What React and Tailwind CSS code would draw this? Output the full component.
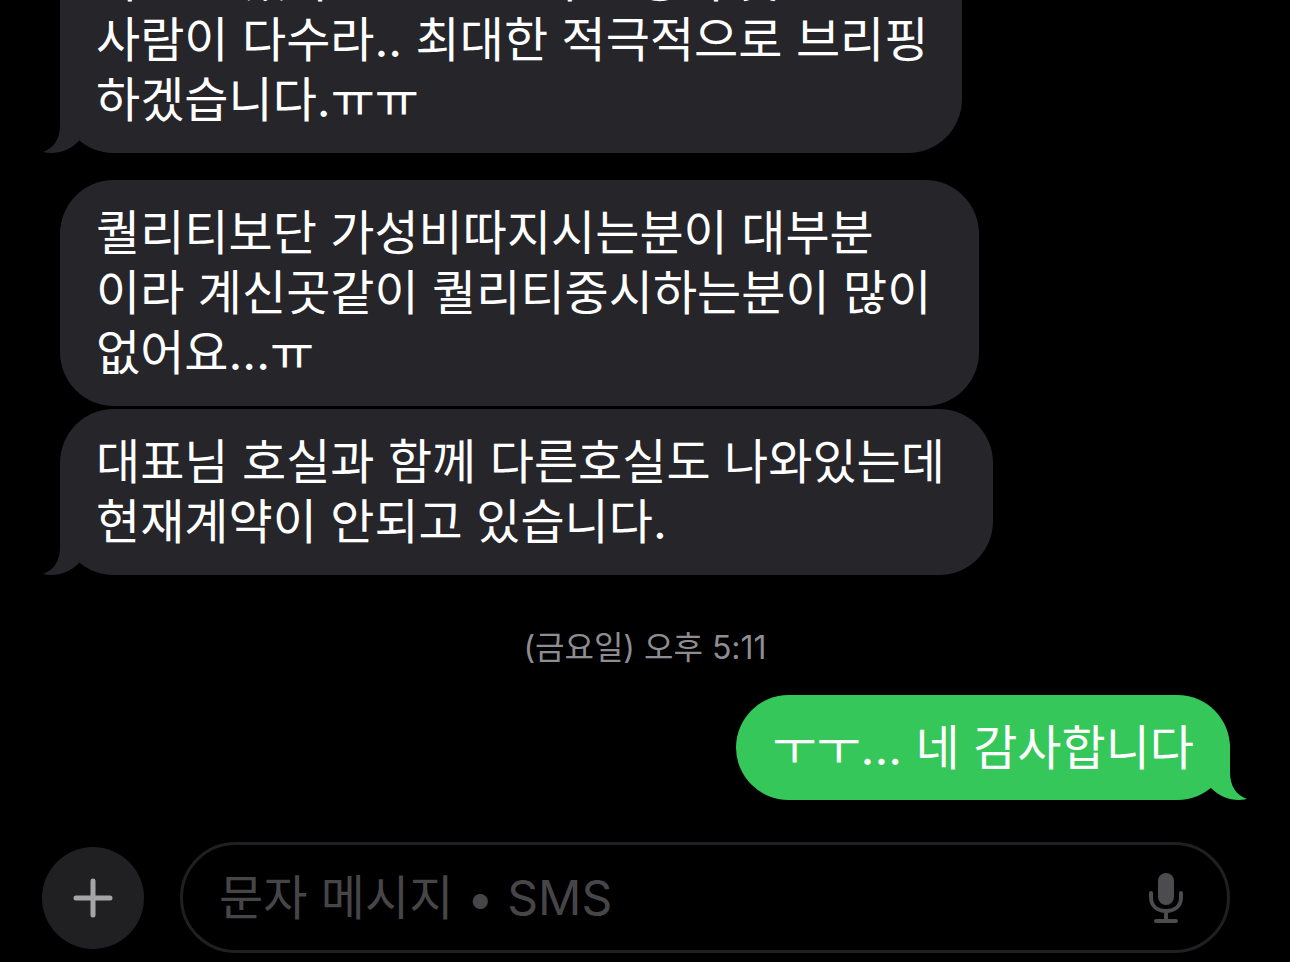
import clsx from "clsx";

const messages = [
  {
    id: 1,
    lines: ["하므로 있다고 보므로 최고 성비 곳", "사람이 다수라.. 최대한 적극적으로 브리핑", "하겠습니다.ㅠㅠ"],
    tail: true,
    className: "pr-[34px]",
  },
  {
    id: 2,
    lines: ["퀄리티보단 가성비따지시는분이 대부분", "이라 계신곳같이 퀄리티중시하는분이 많이", "없어요...ㅠ"],
    tail: false,
    className: "mt-[27px] pr-12",
  },
  {
    id: 3,
    lines: ["대표님 호실과 함께 다른호실도 나와있는데", "현재계약이 안되고 있습니다."],
    tail: true,
    className: "mt-[3px] pr-12",
  },
];

// the path also covers the rounded corner, so only the notch beside the tail shows
function Tail({ sent }) {
  return (
    <svg
      viewBox="0 0 38 56"
      width="38"
      height="56"
      aria-hidden="true"
      className={clsx(
        "absolute bottom-0",
        sent ? "-right-[17px] -scale-x-100 text-[#35c759]" : "-left-[17px] text-[#26252a]"
      )}
    >
      <path d="M17 0V28C17 42 11 51 0 55C13 58 26 54 36 44L38 0Z" fill="currentColor" />
    </svg>
  );
}

function Bubble({ lines, tail, sent, className }) {
  return (
    <div
      className={clsx(
        "relative w-fit rounded-[54px] pl-9 text-5xl/[60px] whitespace-nowrap text-white",
        sent ? "self-end bg-[#35c759]" : "bg-[#26252a]",
        className
      )}
    >
      {tail && <Tail sent={sent} />}
      {lines.map((line) => (
        <p key={line} className="relative">
          {line}
        </p>
      ))}
    </div>
  );
}

function MicIcon() {
  return (
    <svg viewBox="0 0 36 52" width="36" height="52" fill="none" aria-hidden="true">
      <rect x="10" y="1" width="16" height="32" rx="8" fill="currentColor" />
      <path
        d="M3 21V25C3 34 9 39 18 39C27 39 33 34 33 25V21M18 39V49M8 49H28"
        stroke="currentColor"
        strokeWidth="4"
        strokeLinecap="round"
      />
    </svg>
  );
}

export default function App() {
  return (
    <div className="flex h-screen flex-col justify-end overflow-hidden bg-black font-['Inter','Noto_Sans_CJK_KR',sans-serif]">
      <main className="flex flex-col px-[60px]">
        {messages.map((message) => (
          <Bubble
            key={message.id}
            lines={message.lines}
            tail={message.tail}
            className={clsx("py-[23px]", message.className)}
          />
        ))}
        <p className="mt-[51px] text-center text-[32px]/[44px] text-[#8d8d93]">(금요일) 오후 5:11</p>
        <Bubble lines={["ㅜㅜ... 네 감사합니다"]} tail sent className="mt-[25px] pt-[23px] pr-9 pb-[22px]" />
      </main>

      <form className="mt-[42px] mb-[9px] flex items-center gap-9 pr-[60px] pl-[42px]" onSubmit={(e) => e.preventDefault()}>
        <button
          type="button"
          aria-label="추가"
          className="flex size-[102px] shrink-0 items-center justify-center rounded-full bg-[#202022] text-[#a5a5a7]"
        >
          <svg viewBox="0 0 40 40" width="40" height="40" aria-hidden="true">
            <path d="M20 3V37M3 20H37" stroke="currentColor" strokeWidth="5" strokeLinecap="round" />
          </svg>
        </button>
        <div className="flex h-[111px] min-w-0 flex-1 items-center rounded-full border-3 border-[#202022] pr-[43px] pl-9">
          <input
            type="text"
            aria-label="문자 메시지"
            placeholder="문자 메시지 • SMS"
            className="h-[60px] min-w-0 flex-1 bg-transparent text-5xl/[60px] text-white outline-none placeholder:text-[#464649]"
          />
          <button type="button" aria-label="음성 입력" className="shrink-0 text-[#4c4c4e]">
            <MicIcon />
          </button>
        </div>
      </form>
    </div>
  );
}
